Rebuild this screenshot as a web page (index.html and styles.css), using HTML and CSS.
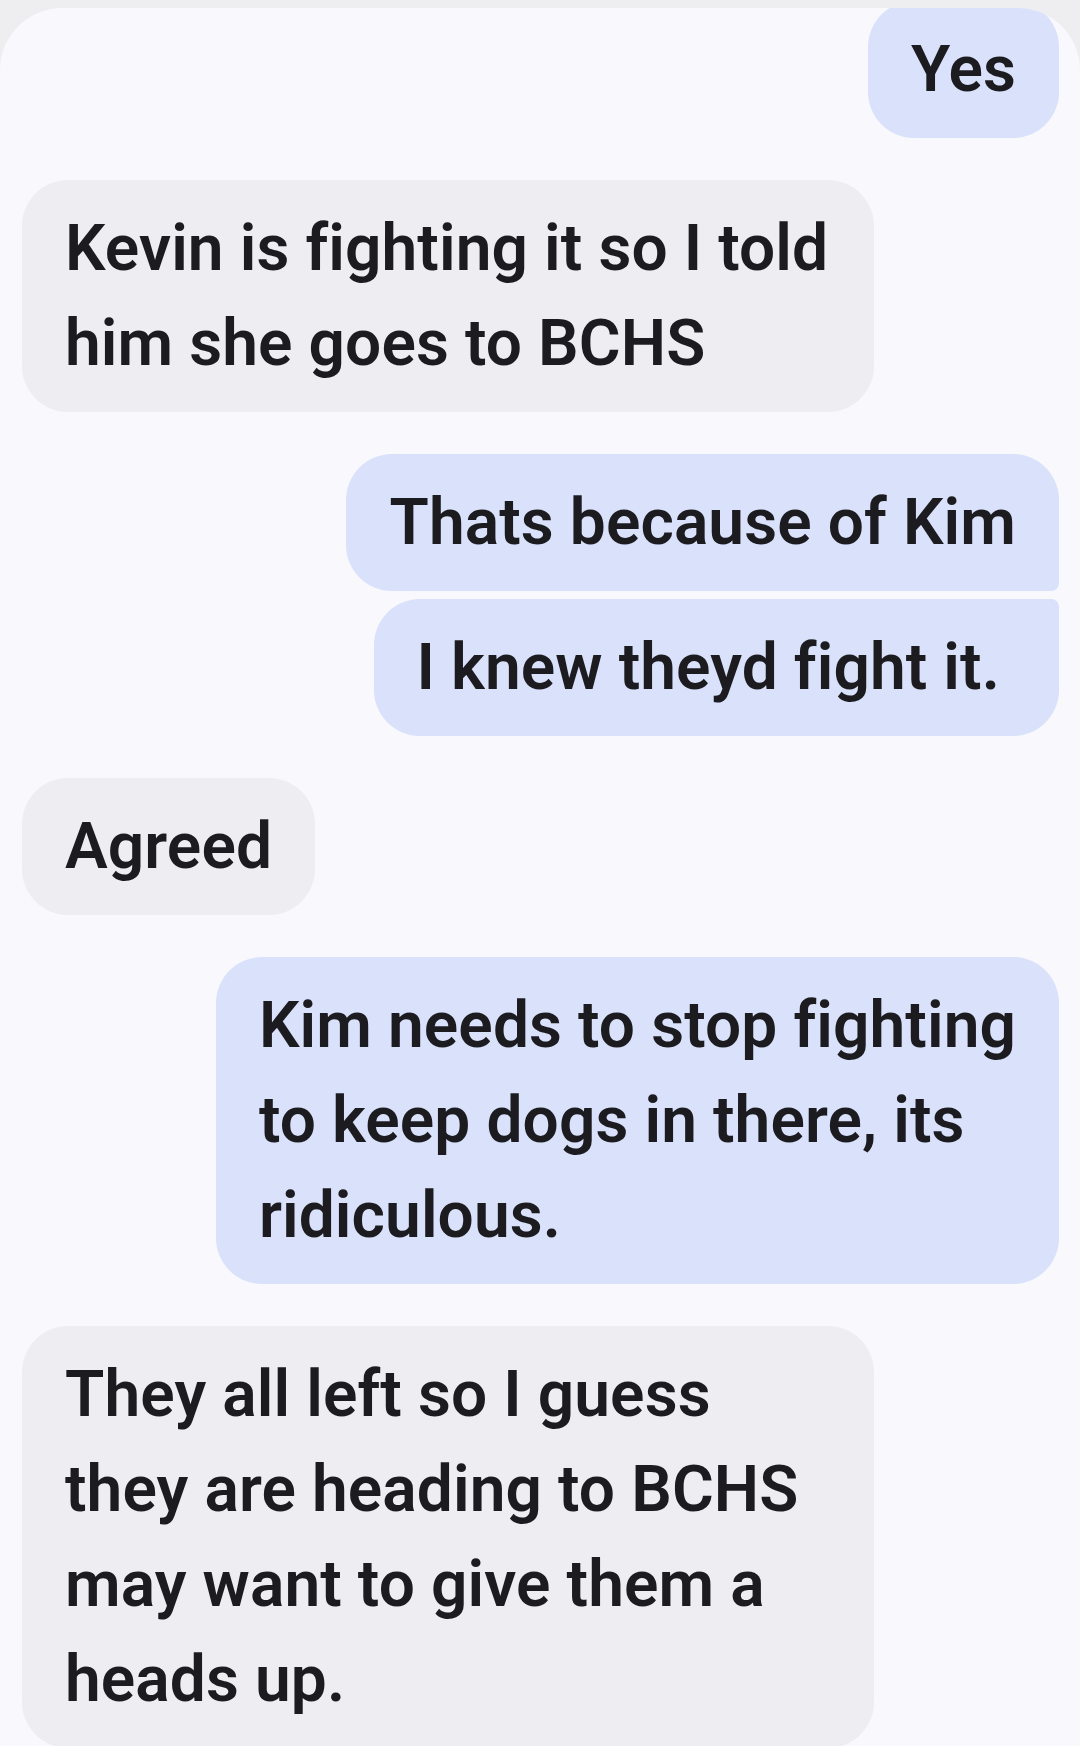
FILE: index.html
```html
<!DOCTYPE html>
<html lang="en">
<head>
  <meta charset="UTF-8" />
  <title>Messages</title>
  <link rel="stylesheet" href="styles.css">
</head>
<body>
<div class="screen">
  <div class="thread">
    <div class="msg out clipped">Yes</div>

    <div class="msg in">Kevin is fighting it so I told<br>him she goes to BCHS</div>

    <div class="group out-group">
      <div class="msg out first">Thats because of Kim</div>
      <div class="msg out last">I knew theyd fight it.&nbsp;</div>
    </div>

    <div class="msg in">Agreed</div>

    <div class="msg out">Kim needs to stop fighting<br>to keep dogs in there, its<br>ridiculous.</div>

    <div class="msg in">They all left so I guess<br>they are heading to BCHS<br>may want to give them a<br>heads up.</div>
  </div>
</div>
</body>
</html>
```

FILE: styles.css
```css
html, body {
  margin: 0;
  padding: 0;
}

body {
  background: #eeeef1;
  padding-top: 8px;
  font-family: "Roboto", "Noto Sans", sans-serif;
  color: #1c1b20;
}

.screen {
  background: #f8f8fd;
  border-radius: 62px 62px 0 0;
  overflow: hidden;
  min-height: 1738px;
}

.thread {
  display: flex;
  flex-direction: column;
  gap: 42px;
  padding: 0 21px 0 22px;
}

.msg {
  max-width: 852px;
  box-sizing: border-box;
  padding: 21px 43px;
  border-radius: 46px;
  font-size: 64px;
  font-weight: 600;
  letter-spacing: 0.1px;
  line-height: 95px;
  white-space: nowrap;
}

.msg.in {
  align-self: flex-start;
  background: #ededf2;
  width: 852px;
}

.msg.in:nth-child(4) {
  width: auto;
}

.msg.out {
  align-self: flex-end;
  background: #d9e2fa;
}

.msg.clipped {
  margin-top: -7px;
}

.group {
  display: flex;
  flex-direction: column;
  gap: 8px;
}

.out-group {
  align-items: flex-end;
}

.msg.first {
  border-bottom-right-radius: 8px;
}

.msg.last {
  border-top-right-radius: 8px;
}
```
